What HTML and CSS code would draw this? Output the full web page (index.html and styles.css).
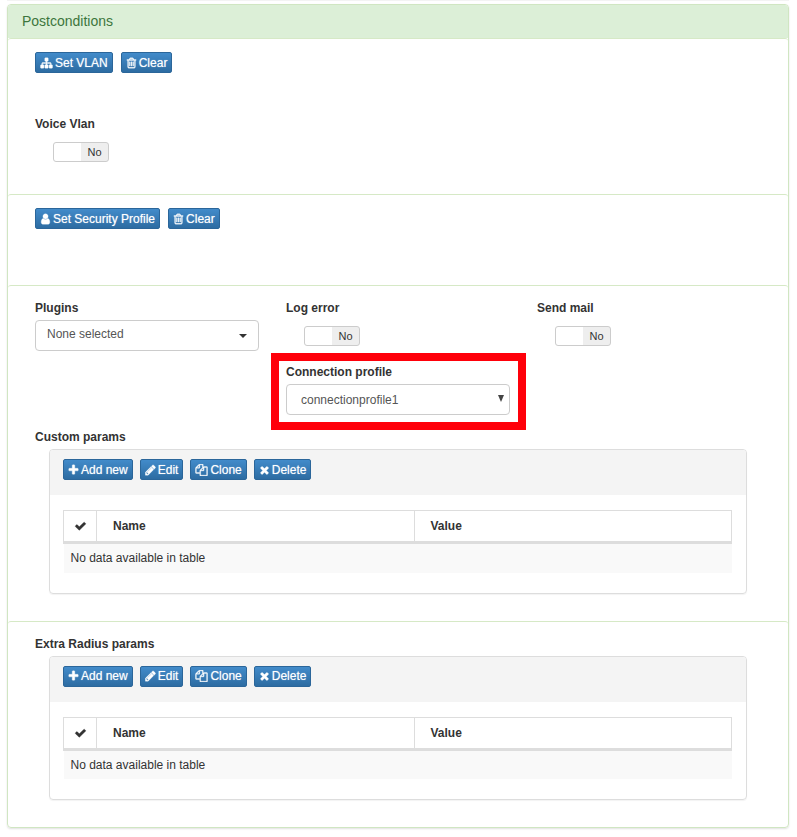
FILE: index.html
```html
<!DOCTYPE html>
<html lang="en">
<head>
<meta charset="utf-8">
<meta name="viewport" content="width=device-width, initial-scale=1">
<title>Postconditions</title>
<link rel="stylesheet" href="styles.css">
</head>
<body>
<svg class="sprite" aria-hidden="true">
  <symbol id="sitemap" viewBox="0 0 1792 1792"><path d="M1792 1248v320q0 40-28 68t-68 28h-320q-40 0-68-28t-28-68v-320q0-40 28-68t68-28h96v-192h-512v192h96q40 0 68 28t28 68v320q0 40-28 68t-68 28h-320q-40 0-68-28t-28-68v-320q0-40 28-68t68-28h96v-192h-512v192h96q40 0 68 28t28 68v320q0 40-28 68t-68 28h-320q-40 0-68-28t-28-68v-320q0-40 28-68t68-28h96v-192q0-52 38-90t90-38h512v-192h-96q-40 0-68-28t-28-68v-320q0-40 28-68t68-28h320q40 0 68 28t28 68v320q0 40-28 68t-68 28h-96v192h512q52 0 90 38t38 90v192h96q40 0 68 28t28 68z"/></symbol>
  <symbol id="trash" viewBox="192 0 1408 1792"><path d="M704 736v576q0 14-9 23t-23 9h-64q-14 0-23-9t-9-23v-576q0-14 9-23t23-9h64q14 0 23 9t9 23zm256 0v576q0 14-9 23t-23 9h-64q-14 0-23-9t-9-23v-576q0-14 9-23t23-9h64q14 0 23 9t9 23zm256 0v576q0 14-9 23t-23 9h-64q-14 0-23-9t-9-23v-576q0-14 9-23t23-9h64q14 0 23 9t9 23zm128 724v-948h-896v948q0 22 7 40.500t14.500 27 10.500 8.500h832q3 0 10.500-8.500t14.500-27 7-40.500zm-672-1076h448l-48-117q-7-9-17-11h-317q-10 2-17 11zm928 32v64q0 14-9 23t-23 9h-96v948q0 83-47 143.500t-113 60.500h-832q-66 0-113-58.500t-47-141.500v-952h-96q-14 0-23-9t-9-23v-64q0-14 9-23t23-9h309l70-167q15-37 54-63t79-26h320q40 0 79 26t54 63l70 167h309q14 0 23 9t9 23z"/></symbol>
  <symbol id="user" viewBox="256 0 1280 1792"><path d="M1536 1399q0 109-62.500 187t-150.500 78h-854q-88 0-150.500-78t-62.500-187q0-85 8.500-160.500t31.500-152 58.500-131 94-89 134.500-34.500q131 128 313 128t313-128q76 0 134.500 34.500t94 89 58.500 131 31.500 152 8.500 160.500zm-256-887q0 159-112.500 271.500t-271.500 112.500-271.500-112.500-112.500-271.500 112.500-271.500 271.500-112.500 271.500 112.500 112.500 271.500z"/></symbol>
  <symbol id="plus" viewBox="192 0 1408 1792"><path d="M1600 736v192q0 40-28 68t-68 28h-416v416q0 40-28 68t-68 28h-192q-40 0-68-28t-28-68v-416h-416q-40 0-68-28t-28-68v-192q0-40 28-68t68-28h416v-416q0-40 28-68t68-28h192q40 0 68 28t28 68v416h416q40 0 68 28t28 68z"/></symbol>
  <symbol id="pencil" viewBox="128 0 1536 1792"><path d="M491 1536l91-91-235-235-91 91v107h128v128h107zm523-928q0-22-22-22-10 0-17 7l-542 542q-7 7-7 17 0 22 22 22 10 0 17-7l542-542q7-7 7-17zm-54-192l416 416-832 832h-416v-416zm683 96q0 53-37 90l-166 166-416-416 166-165q36-38 90-38 53 0 91 38l235 234q37 39 37 91z"/></symbol>
  <symbol id="copy" viewBox="0 0 1792 1792"><path d="M1696 384q40 0 68 28t28 68v1216q0 40-28 68t-68 28h-960q-40 0-68-28t-28-68v-288h-544q-40 0-68-28t-28-68v-672q0-40 20-88t48-76l408-408q28-28 76-48t88-20h416q40 0 68 28t28 68v328q68-40 128-40h416zm-544 213l-299 299h299v-299zm-640-384l-299 299h299v-299zm196 647l316-316v-416h-384v416q0 40-28 68t-68 28h-416v640h512v-256q0-40 20-88t48-76zm956 804v-1152h-384v416q0 40-28 68t-68 28h-416v640h896z"/></symbol>
  <symbol id="times" viewBox="192 0 1408 1792"><path d="M1490 1322q0 40-28 68l-136 136q-28 28-68 28t-68-28l-294-294-294 294q-28 28-68 28t-68-28l-136-136q-28-28-28-68t28-68l294-294-294-294q-28-28-28-68t28-68l136-136q28-28 68-28t68 28l294 294 294-294q28-28 68-28t68 28l136 136q28 28 28 68t-28 68l-294 294 294 294q28 28 28 68z"/></symbol>
  <symbol id="check" viewBox="0 0 1792 1792"><path d="M1671 566q0 40-28 68l-724 724-136 136q-28 28-68 28t-68-28l-136-136-362-362q-28-28-28-68t28-68l136-136q28-28 68-28t68 28l294 295 656-657q28-28 68-28t68 28l136 136q28 28 28 68z"/></symbol>
</svg>

<main class="panel">
  <h1 class="panel-title">Postconditions</h1>

  <section class="section section-vlan">
    <div class="buttons">
      <button type="button" class="btn"><svg class="icon wide"><use href="#sitemap"/></svg>Set VLAN</button>
      <button type="button" class="btn"><svg class="icon"><use href="#trash"/></svg>Clear</button>
    </div>
    <div class="field">
      <label class="label" for="voice">Voice Vlan</label>
      <span class="toggle"><input type="checkbox" id="voice"><span class="state">No</span></span>
    </div>
  </section>

  <section class="section section-security">
    <div class="buttons">
      <button type="button" class="btn"><svg class="icon"><use href="#user"/></svg>Set Security Profile</button>
      <button type="button" class="btn"><svg class="icon"><use href="#trash"/></svg>Clear</button>
    </div>
  </section>

  <section class="section">
    <div class="fields">
      <div class="field">
        <label class="label" for="plugins">Plugins</label>
        <button type="button" class="control dropdown" id="plugins">None selected<span class="caret"></span></button>
      </div>
      <div class="field">
        <label class="label" for="log">Log error</label>
        <span class="toggle"><input type="checkbox" id="log"><span class="state">No</span></span>
      </div>
      <div class="field">
        <label class="label" for="mail">Send mail</label>
        <span class="toggle"><input type="checkbox" id="mail"><span class="state">No</span></span>
      </div>
      <div class="field highlighted">
        <label class="label" for="profile">Connection profile</label>
        <div class="select">
          <select class="control" id="profile"><option>connectionprofile1</option></select>
          <svg class="arrow" viewBox="0 0 6 7"><path d="M0 0h6L3 7z"/></svg>
        </div>
      </div>
    </div>

    <h2 class="label">Custom params</h2>
    <div class="card">
      <div class="toolbar">
        <button type="button" class="btn"><svg class="icon"><use href="#plus"/></svg>Add new</button>
        <button type="button" class="btn"><svg class="icon"><use href="#pencil"/></svg>Edit</button>
        <button type="button" class="btn"><svg class="icon wide"><use href="#copy"/></svg>Clone</button>
        <button type="button" class="btn"><svg class="icon"><use href="#times"/></svg>Delete</button>
      </div>
      <table class="table">
        <thead><tr><th class="pick"><svg class="icon wide"><use href="#check"/></svg></th><th>Name</th><th>Value</th></tr></thead>
        <tbody><tr><td colspan="3">No data available in table</td></tr></tbody>
      </table>
    </div>
  </section>

  <section class="section">
    <h2 class="label">Extra Radius params</h2>
    <div class="card">
      <div class="toolbar">
        <button type="button" class="btn"><svg class="icon"><use href="#plus"/></svg>Add new</button>
        <button type="button" class="btn"><svg class="icon"><use href="#pencil"/></svg>Edit</button>
        <button type="button" class="btn"><svg class="icon wide"><use href="#copy"/></svg>Clone</button>
        <button type="button" class="btn"><svg class="icon"><use href="#times"/></svg>Delete</button>
      </div>
      <table class="table">
        <thead><tr><th class="pick"><svg class="icon wide"><use href="#check"/></svg></th><th>Name</th><th>Value</th></tr></thead>
        <tbody><tr><td colspan="3">No data available in table</td></tr></tbody>
      </table>
    </div>
  </section>
</main>
</body>
</html>
```
FILE: styles.css
```css
* { box-sizing: border-box; }

body {
  margin: 0;
  padding: 0 8px 8px 7px;
  background: #fff;
  color: #333;
  font: 12px/16px "Liberation Sans", Arial, sans-serif;
}

body::before {
  content: "";
  display: block;
  height: 1px;
  margin-bottom: 3px;
  background: #f3f3f3;
}

button, select, input { font: inherit; color: inherit; }

.sprite { display: none; }

.panel {
  border: 1px solid #d0e6c2;
  border-radius: 4px;
  box-shadow: 0 1px 2px rgba(0, 0, 0, .12);
}

.panel-title {
  margin: 0;
  padding: 6px 14px 7px;
  border-radius: 3px 3px 0 0;
  background: #dcefd7;
  color: #3c763d;
  font-size: 14px;
  font-weight: 400;
  line-height: 20px;
}

.section {
  padding: 14px 27px 27px;
  border-top: 1px solid #d6e9c6;
  border-radius: 3px 3px 0 0;
}

.section-vlan { padding: 13px 27px 32px; }
.section-security { padding: 13px 27px 56px; }

.buttons { display: flex; gap: 8px; }
.section-vlan .buttons { margin-bottom: 43px; }

.btn {
  display: inline-flex;
  align-items: center;
  gap: 2px;
  height: 21px;
  padding: 0 4px;
  border: 1px solid #2b669a;
  border-radius: 2px;
  background: linear-gradient(#428bca, #2d6ca2);
  color: #fff;
  line-height: 18px;
  text-shadow: 0 0 1px rgba(255, 255, 255, .6);
  white-space: nowrap;
}

.icon {
  width: 11px;
  height: 12px;
  fill: currentColor;
  stroke: currentColor;
  stroke-width: 50;
}
.icon.wide { width: 13px; }

.label {
  display: block;
  margin: 0 0 4px;
  font-size: 12px;
  font-weight: 700;
  line-height: 16px;
}

.fields {
  display: grid;
  grid-template-columns: repeat(3, minmax(0, 1fr));
  gap: 13px 27px;
  margin-bottom: 14px;
}

.toggle {
  position: relative;
  display: flex;
  width: 56px;
  height: 20px;
  margin: 10px 18px 0;
  border: 1px solid #ccc;
  border-radius: 3px;
  background: linear-gradient(90deg, #fff 50%, #eee 50%);
}

.toggle input {
  position: absolute;
  inset: 0;
  width: 100%;
  height: 100%;
  margin: 0;
  appearance: none;
}

.state {
  width: 50%;
  margin-left: auto;
  font-size: 11px;
  line-height: 19px;
  text-align: center;
}

.control {
  display: block;
  width: 100%;
  height: 31px;
  border: 1px solid #ccc;
  border-radius: 4px;
  background: #fff;
  color: #555;
}

.dropdown {
  display: flex;
  align-items: center;
  justify-content: space-between;
  padding: 0 11px 3px;
}

.caret {
  margin-top: 4px;
  border: 4px solid transparent;
  border-top-color: #333;
  border-bottom: 0;
}

.highlighted {
  position: relative;
  grid-column: 2;
}

.highlighted::after {
  content: "";
  position: absolute;
  inset: -11px -16px -15px -15px;
  border: 8px solid #ff000a;
  pointer-events: none;
}

.select { position: relative; }
.select .control { padding: 0 14px; appearance: none; }

.arrow {
  position: absolute;
  top: 11px;
  right: 6px;
  width: 6px;
  height: 7px;
  fill: #444;
  pointer-events: none;
}

.card {
  margin: 0 14px;
  padding-bottom: 20px;
  border: 1px solid #ddd;
  border-radius: 4px;
  box-shadow: 0 1px 1px rgba(0, 0, 0, .05);
}

.toolbar {
  display: flex;
  gap: 7px;
  padding: 9px 13px 15px;
  border-radius: 3px 3px 0 0;
  background: #f4f4f4;
}

.table {
  width: calc(100% - 27px);
  margin: 15px 14px 0 13px;
  border-collapse: collapse;
  table-layout: fixed;
}

.table th {
  height: 32px;
  padding: 0 16px;
  border: 1px solid #ddd;
  border-bottom-width: 3px;
  text-align: left;
}

.table .pick { width: 33px; padding: 0; text-align: center; }
.pick .icon { display: block; margin: 0 auto; }

.table td {
  height: 30px;
  padding: 0 7px;
  background: #f9f9f9;
}
```
